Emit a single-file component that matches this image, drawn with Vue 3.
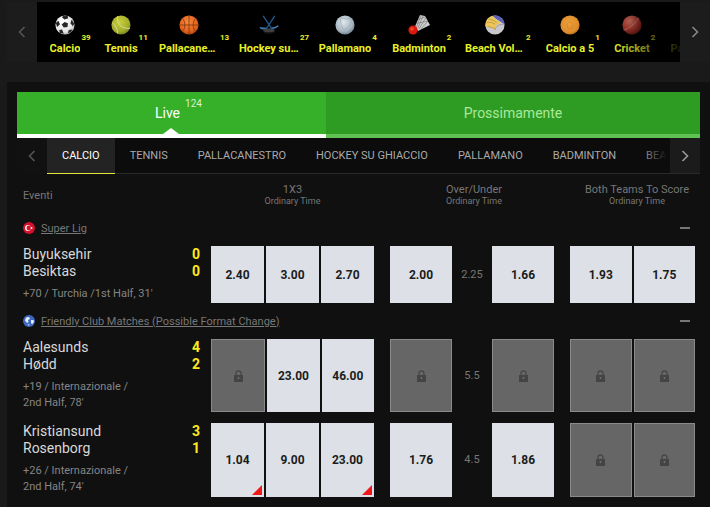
<script setup>
const sports = [
  { key: 'soccer', label: 'Calcio', count: 39, w: 56 },
  { key: 'tennis', label: 'Tennis', count: 11, w: 56 },
  { key: 'basket', label: 'Pallacanestro', count: 13, w: 80 },
  { key: 'hockey', label: 'Hockey su ghiaccio', count: 27, w: 80 },
  { key: 'hand', label: 'Pallamano', count: 4, w: 72 },
  { key: 'badminton', label: 'Badminton', count: 2, w: 76 },
  { key: 'volley', label: 'Beach Volley', count: 2, w: 76 },
  { key: 'futsal', label: 'Calcio a 5', count: 1, w: 74 },
  { key: 'cricket', label: 'Cricket', count: 2, w: 50 },
  { key: 'none', label: 'Pallanuoto', count: 0, w: 80 }
]
const tabs = ['Calcio', 'Tennis', 'Pallacanestro', 'Hockey su ghiaccio', 'Pallamano', 'Badminton', 'Beach Volley']
const leagues = [
  {
    name: 'Super Lig', flag: 'tr',
    matches: [
      { home: 'Buyuksehir', away: 'Besiktas', hs: 0, as: 0, meta: "+70 / Turchia /1st Half, 31'",
        x3: [{ v: '2.40' }, { v: '3.00' }, { v: '2.70' }], line: '2.25', ou: [{ v: '2.00' }, { v: '1.66' }], bt: [{ v: '1.93' }, { v: '1.75' }] }
    ]
  },
  {
    name: 'Friendly Club Matches (Possible Format Change)', flag: 'world',
    matches: [
      { home: 'Aalesunds', away: 'Hødd', hs: 4, as: 2, meta: "+19 / Internazionale /\n2nd Half, 78'",
        x3: [{}, { v: '23.00' }, { v: '46.00' }], line: '5.5', ou: [{}, {}], bt: [{}, {}] },
      { home: 'Kristiansund', away: 'Rosenborg', hs: 3, as: 1, meta: "+26 / Internazionale /\n2nd Half, 74'",
        x3: [{ v: '1.04', drop: true }, { v: '9.00' }, { v: '23.00', drop: true }], line: '4.5', ou: [{ v: '1.76' }, { v: '1.86' }], bt: [{}, {}] }
    ]
  }
]
</script>

<template>
  <div class="page">
    <div class="strip">
      <button class="strip-arrow">
        <svg width="8" height="12" viewBox="0 0 8 12"><path d="M6.5 1 1.5 6l5 5" fill="none" stroke="#555" stroke-width="1.6"/></svg>
      </button>
      <div class="sports">
        <div v-for="s in sports" :key="s.key" class="sport" :style="{ width: s.w + 'px' }">
          <svg v-if="s.key === 'soccer'" class="ico" viewBox="0 0 24 24">
            <defs><radialGradient id="gs" cx=".4" cy=".35" r=".75"><stop offset="0" stop-color="#fff"/><stop offset=".7" stop-color="#e4e4e4"/><stop offset="1" stop-color="#8a8a8a"/></radialGradient></defs>
            <circle cx="12" cy="12" r="11.500" fill="url(#gs)"/>
            <path d="M11.500 8.500 15.500 10 15 14.500 10.500 15 8 11.500ZM1 9.500l3-2.500 2 4-3.500 3.500ZM10 .7l5 .3 1 3-4.500 1.500L8.500 3ZM20 5.500l3 5-1.500 3-3-3.500ZM5 18l3.500-.5 2 5L6 21.500ZM15.500 22l1-4 4-.5-1 3Z" fill="#26262a"/>
          </svg>
          <svg v-else-if="s.key === 'tennis'" class="ico" viewBox="0 0 24 24">
            <defs><radialGradient id="gt" cx=".42" cy=".35" r=".75"><stop offset="0" stop-color="#c9d13a"/><stop offset=".65" stop-color="#a3ad2a"/><stop offset="1" stop-color="#5f6a1a"/></radialGradient></defs>
            <circle cx="12" cy="12" r="11.500" fill="url(#gt)"/>
            <path d="M8 1.500C6 8 11 17 22.500 16M1.500 9C5 12 8 17 8 22" fill="none" stroke="#d8dcae" stroke-width="1.100"/>
          </svg>
          <svg v-else-if="s.key === 'basket'" class="ico" viewBox="0 0 24 24">
            <defs><radialGradient id="gb" cx=".45" cy=".35" r=".75"><stop offset="0" stop-color="#f58a3c"/><stop offset=".65" stop-color="#e2611c"/><stop offset="1" stop-color="#8e3108"/></radialGradient></defs>
            <circle cx="12" cy="12" r="11.500" fill="url(#gb)"/>
            <path d="M.5 12h23M12 .5v23M4 4c4 4 4 12 0 16M20 4c-4 4-4 12 0 16" fill="none" stroke="#6e2c0b" stroke-width=".8"/>
          </svg>
          <svg v-else-if="s.key === 'hockey'" class="ico" viewBox="0 0 24 24">
            <path d="M5 1 15 16l6-1M19 1 9 16l-6-1" fill="none" stroke="#1f5d95" stroke-width="1.500"/>
            <path d="M1 15c3 2 6 2 8 1M23 13c-2 2-5 3-8 3" fill="none" stroke="#4a86bd" stroke-width="1.600"/>
            <ellipse cx="12" cy="18.500" rx="7" ry="2.500" fill="#3c3e42"/>
            <path d="M5 18.500v1.500c0 1.500 3 2.500 7 2.500s7-1 7-2.500v-1.500c0 1.500-3 2.500-7 2.500s-7-1-7-2.500Z" fill="#15161a"/>
          </svg>
          <svg v-else-if="s.key === 'hand'" class="ico" viewBox="0 0 24 24">
            <defs><radialGradient id="gh" cx=".42" cy=".35" r=".75"><stop offset="0" stop-color="#dfe7ec"/><stop offset=".6" stop-color="#aab9c4"/><stop offset="1" stop-color="#5f6d78"/></radialGradient></defs>
            <circle cx="12" cy="12" r="11.500" fill="url(#gh)"/>
            <path d="M7 3c4 2 8 2 12 1M7 3c-1 5 0 11 4 15M19 4c1 5 0 10-8 14" fill="none" stroke="#8c9ba7" stroke-width=".6"/>
          </svg>
          <svg v-else-if="s.key === 'badminton'" class="ico bad" viewBox="0 0 22 21">
            <path d="M7 12.500 12 1l5 1 5 9-12 6Z" fill="#cdcdcd"/>
            <path d="M8.500 13 13 1.500M10 14 15 2M11 15 18 3.500M13 15 20 7M8 9.500 20 7M10 5.500 17 3" stroke="#6f6f6f" stroke-width=".6" fill="none"/>
            <circle cx="5" cy="16" r="4.600" fill="#d81a0e"/><circle cx="4" cy="15" r="1.800" fill="#f04a30"/>
          </svg>
          <svg v-else-if="s.key === 'volley'" class="ico" viewBox="0 0 24 24">
            <circle cx="12" cy="12" r="11.500" fill="#c7c7cd"/>
            <path d="M9 .9A11.500 11.500 0 0 1 23.500 11C19 8 14 6 9 .9Z" fill="#5a61b8"/>
            <path d="M9 .9A11.500 11.500 0 0 0 .6 14c5 0 8 1 11 4 1-5 3-8 8-9C15 7 12 5 9 .9Z" fill="#eec556"/>
            <path d="M2 9c3-1 6 0 10 2M4 5c3 0 6 1 10 4M3 14c3 0 7 1 9 3" stroke="#8a7d3a" stroke-width=".6" fill="none"/>
            <path d="M12 18c1-4 4-7 11.300-7" stroke="#777" stroke-width=".6" fill="none"/>
          </svg>
          <svg v-else-if="s.key === 'futsal'" class="ico" viewBox="0 0 24 24">
            <defs><radialGradient id="gf" cx=".45" cy=".4" r=".7"><stop offset="0" stop-color="#eda03a"/><stop offset=".7" stop-color="#de8c2c"/><stop offset="1" stop-color="#9f5c16"/></radialGradient></defs>
            <circle cx="12" cy="12" r="11.500" fill="url(#gf)"/>
            <path d="M12 8l4 3-1.500 5h-5L8 11Z" fill="none" stroke="#c87a22" stroke-width=".6"/>
          </svg>
          <svg v-else-if="s.key === 'cricket'" class="ico" viewBox="0 0 24 24">
            <defs><radialGradient id="gc" cx=".4" cy=".3" r=".8"><stop offset="0" stop-color="#e88070"/><stop offset=".55" stop-color="#b83a2e"/><stop offset="1" stop-color="#5e1610"/></radialGradient></defs>
            <circle cx="12" cy="12" r="11.500" fill="url(#gc)"/>
            <path d="M2 18C9 16 17 10 20 3" fill="none" stroke="#e8c0b0" stroke-width="1" stroke-dasharray="1 .7"/>
          </svg>
          <div v-else class="ico"></div>
          <div class="sport-label">
            <span class="sport-name">{{ s.label }}</span>
            <span class="sport-count" v-if="s.count">{{ s.count }}</span>
          </div>
        </div>
        <div class="sports-fade"></div>
      </div>
      <button class="strip-arrow">
        <svg width="8" height="12" viewBox="0 0 8 12"><path d="M1.500 1 6.500 6l-5 5" fill="none" stroke="#888" stroke-width="1.600"/></svg>
      </button>
    </div>

    <div class="panel">
      <div class="main-tabs">
        <div class="main-tab active">
          <span class="main-label">Live<sup class="main-count">124</sup></span>
          <i class="pointer"></i>
        </div>
        <div class="main-tab next"><span>Prossimamente</span></div>
      </div>

      <div class="nav">
        <button class="nav-arrow">
          <svg width="8" height="12" viewBox="0 0 8 12"><path d="M6.500 1 1.500 6l5 5" fill="none" stroke="#555" stroke-width="1.600"/></svg>
        </button>
        <div class="nav-items">
          <div v-for="(t, i) in tabs" :key="t" class="nav-item" :class="{ on: i === 0 }">{{ t }}</div>
          <div class="nav-fade"></div>
        </div>
        <button class="nav-arrow right">
          <svg width="8" height="12" viewBox="0 0 8 12"><path d="M1.500 1 6.500 6l-5 5" fill="none" stroke="#999" stroke-width="1.600"/></svg>
        </button>
      </div>

      <div class="head">
        <div class="head-name">Eventi</div>
        <div class="head-col x3"><b>1X3</b><small>Ordinary Time</small></div>
        <div class="head-col ou"><b>Over/Under</b><small>Ordinary Time</small></div>
        <div class="head-col bt"><b>Both Teams To Score</b><small>Ordinary Time</small></div>
      </div>

      <section v-for="l in leagues" :key="l.name">
        <div class="league" :class="l.flag">
          <svg v-if="l.flag === 'tr'" class="flag" viewBox="0 0 12 12">
            <circle cx="6" cy="6" r="6" fill="#d5102a"/>
            <circle cx="5" cy="6" r="3" fill="#fff"/><circle cx="5.900" cy="6" r="2.400" fill="#d5102a"/>
            <circle cx="8.500" cy="6" r="1" fill="#fff"/>
          </svg>
          <svg v-else class="flag" viewBox="0 0 12 12">
            <circle cx="6" cy="6" r="6" fill="#3d68c4"/>
            <path d="M3 2.500 6 2l1 2-2 1 .5 2L4 8 2 5.500ZM8 5l2.500 0 .5 2-2 2.500-1-2Z" fill="#e4ecf8"/>
            <path d="M4.500 9l2 .5-.5 1.500Z" fill="#e4ecf8"/>
          </svg>
          <a class="league-name">{{ l.name }}</a>
          <i class="collapse"></i>
        </div>
        <div v-for="m in l.matches" :key="m.home" class="match">
          <div class="teams">
            <div class="team"><span>{{ m.home }}</span><b>{{ m.hs }}</b></div>
            <div class="team"><span>{{ m.away }}</span><b>{{ m.as }}</b></div>
            <div class="meta">{{ m.meta }}</div>
          </div>
          <div class="grp x3">
            <div v-for="(o, i) in m.x3" :key="i" class="odd" :class="{ locked: !o.v }">
              <template v-if="o.v">{{ o.v }}</template>
              <svg v-else class="lock" viewBox="0 0 9 12"><path d="M2 5V3.300a2.500 2.500 0 0 1 5 0V5" fill="none" stroke="#444" stroke-width="1.200"/><path d="M0 5h9v7H0Z" fill="#444"/><circle cx="4.500" cy="8" r=".9" fill="#777"/></svg>
              <i v-if="o.drop" class="drop"></i>
            </div>
          </div>
          <div class="grp ou">
            <div class="odd" :class="{ locked: !m.ou[0].v }">
              <template v-if="m.ou[0].v">{{ m.ou[0].v }}</template>
              <svg v-else class="lock" viewBox="0 0 9 12"><path d="M2 5V3.300a2.500 2.500 0 0 1 5 0V5" fill="none" stroke="#444" stroke-width="1.200"/><path d="M0 5h9v7H0Z" fill="#444"/><circle cx="4.500" cy="8" r=".9" fill="#777"/></svg>
            </div>
            <div class="line">{{ m.line }}</div>
            <div class="odd" :class="{ locked: !m.ou[1].v }">
              <template v-if="m.ou[1].v">{{ m.ou[1].v }}</template>
              <svg v-else class="lock" viewBox="0 0 9 12"><path d="M2 5V3.300a2.500 2.500 0 0 1 5 0V5" fill="none" stroke="#444" stroke-width="1.200"/><path d="M0 5h9v7H0Z" fill="#444"/><circle cx="4.500" cy="8" r=".9" fill="#777"/></svg>
            </div>
          </div>
          <div class="grp bt">
            <div v-for="(o, i) in m.bt" :key="i" class="odd" :class="{ locked: !o.v }">
              <template v-if="o.v">{{ o.v }}</template>
              <svg v-else class="lock" viewBox="0 0 9 12"><path d="M2 5V3.300a2.500 2.500 0 0 1 5 0V5" fill="none" stroke="#444" stroke-width="1.200"/><path d="M0 5h9v7H0Z" fill="#444"/><circle cx="4.500" cy="8" r=".9" fill="#777"/></svg>
            </div>
          </div>
        </div>
      </section>
    </div>
  </div>
</template>

<style>
html, body { margin: 0; background: #1a1a1a; }
</style>

<style scoped>
.page {
  height: 507px;
  width: 710px;
  overflow: hidden;
  box-sizing: border-box;
  padding: 2px 0 0 7px;
  background: #1a1a1a;
  font-family: Roboto, "Liberation Sans", sans-serif;
}
button { border: 0; padding: 0; margin: 0; cursor: pointer; display: flex; align-items: center; justify-content: center; }

.strip { display: flex; height: 60px; margin-bottom: 20px; }
.strip-arrow { flex: 0 0 30px; background: #1c1c1c; }
.sports { position: relative; flex: 1; min-width: 0; display: flex; background: #000; overflow: hidden; }
.sport { flex: none; display: flex; flex-direction: column; align-items: center; padding-top: 13px; box-sizing: border-box; }
.ico { width: 20px; height: 20px; display: block; }
.ico.bad { width: 22px; height: 21px; margin-top: -1px; }
.sport-label { position: relative; margin-top: 7px; line-height: 14px; font-size: 11px; font-weight: 700; color: #e8f02a; }
.sport-name { display: block; max-width: 60px; white-space: nowrap; overflow: hidden; text-overflow: ellipsis; }
.sport-count { position: absolute; left: 100%; top: -9px; font-size: 8px; line-height: 10px; font-weight: 700; margin-left: 1px; }
.sports-fade { position: absolute; right: 0; top: 0; bottom: 0; width: 70px; background: linear-gradient(to right, rgba(0,0,0,0), rgba(0,0,0,.9)); }

.panel { background: #101010; padding: 10px 10px 0; height: 425px; box-sizing: border-box; }

.main-tabs { display: flex; height: 46px; }
.main-tab { position: relative; box-sizing: border-box; height: 46px; display: flex; align-items: center; justify-content: center; font-size: 14px; }
.main-tab.active { flex: 0 0 309px; background: #35b028; border-bottom: 4px solid #fff; color: #fff; }
.main-tab.next { flex: 1; background: #2e9c23; border-bottom: 4px solid #5fc252; color: #a9e99c; }
.main-label { position: relative; margin-right: 8px; }
.main-count { position: absolute; left: 100%; top: -7px; margin-left: 5px; font-size: 10px; line-height: 12px; color: #d6f2d0; font-weight: 400; vertical-align: baseline; }
.pointer { position: absolute; left: 146px; bottom: 0; width: 0; height: 0; border-left: 8px solid transparent; border-right: 8px solid transparent; border-bottom: 6px solid #fff; }

.nav { display: flex; height: 36px; background: #0c0c0c; box-shadow: inset 0 -1px 0 #2a2a2a; }
.nav-arrow { flex: 0 0 30px; background: #111; height: 36px; }
.nav-arrow.right { background: #1b1b1b; height: 35px; }
.nav-items { position: relative; flex: 1; min-width: 0; display: flex; overflow: hidden; }
.nav-item { flex: none; padding: 0 15px; line-height: 35px; height: 36px; box-sizing: border-box; font-size: 11px; text-transform: uppercase; color: #aaa; white-space: nowrap; }
.nav-item.on { background: #232323; color: #fff; border-bottom: 1px solid #e2e83a; }
.nav-fade { position: absolute; right: 0; top: 0; bottom: 1px; width: 30px; background: linear-gradient(to right, rgba(12,12,12,0), #0c0c0c 90%); }

.head { display: flex; height: 36px; align-items: flex-start; padding-top: 9px; box-sizing: border-box; color: #777; }
.head-name { flex: 0 0 194px; box-sizing: border-box; padding: 6px 0 0 6px; font-size: 11px; line-height: 13px; }
.head-col { display: flex; flex-direction: column; align-items: center; white-space: nowrap; }
.head-col b { font-weight: 400; font-size: 11px; line-height: 13px; }
.head-col small { font-size: 9px; line-height: 11px; }
.head-col.x3 { flex: 0 0 163px; }
.head-col.ou { flex: 0 0 164px; margin-left: 16px; padding-left: 4px; box-sizing: border-box; }
.head-col.bt { flex: 0 0 125px; margin-left: 16px; padding-left: 9px; box-sizing: border-box; }

.league { display: flex; align-items: center; height: 36px; padding: 0 10px 0 6px; }
.flag { width: 12px; height: 12px; flex: none; margin-right: 6px; }
.league-name { font-size: 11px; color: #777; text-decoration: underline; flex: 1; }
.collapse { width: 10px; height: 2px; background: #777; display: block; }

.match { display: flex; align-items: stretch; }
.match + .match { margin-top: 11px; }
.teams { flex: 0 0 194px; box-sizing: border-box; min-height: 57px; padding: 0 11px .83px 6px; }
.team { display: flex; justify-content: space-between; font-size: 14px; line-height: 17px; color: #d8d8d8; }
.team b { color: #ffe81e; font-weight: 700; }
.meta { margin-top: 5.5px; font-size: 11px; line-height: 16.5px; color: #858585; white-space: pre-line; }
.grp { display: flex; gap: 2px; }
.grp.x3 { flex: 0 0 163px; }
.grp.x3 .odd { flex: 1; }
.grp.ou { flex: 0 0 164px; margin-left: 16px; gap: 0; }
.grp.ou .odd { flex: 0 0 62px; }
.grp.bt { flex: 0 0 125px; margin-left: 16px; }
.grp.bt .odd { flex: 1; }
.line { flex: 1; display: flex; align-items: center; justify-content: center; font-size: 11px; color: #777; }
.odd { position: relative; box-sizing: border-box; display: flex; align-items: center; justify-content: center; padding-top: 1px; background: #dde1e7; color: #1a1c20; font-size: 12px; font-weight: 700; }
.odd.locked { background: #666; border: 1px solid #8a8a8a; padding-top: 0; }
.lock { width: 9px; height: 12px; display: block; }
.drop { position: absolute; right: 2px; bottom: 2px; width: 0; height: 0; border-left: 10px solid transparent; border-bottom: 10px solid #f01818; }
</style>
